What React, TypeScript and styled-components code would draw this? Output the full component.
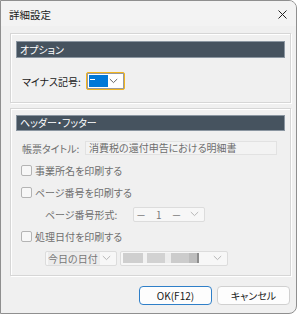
import styled, { createGlobalStyle } from 'styled-components';

const GlobalStyle = createGlobalStyle`
  html, body {
    margin: 0;
    padding: 0;
    background: #ffffff;
  }
  body {
    font-family: "Noto Sans CJK JP", "Noto Sans", sans-serif;
    font-feature-settings: "palt";
  }
`;

const Chevron: React.FC<{ color?: string }> = ({ color = '#8a8a8a' }) => (
  <svg width="9" height="6" viewBox="0 0 9 6">
    <path d="M0.8 1 L4.5 4.6 L8.2 1" fill="none" stroke={color} strokeWidth="0.9" />
  </svg>
);

const Check: React.FC<{ label: string }> = ({ label }) => (
  <CheckRow>
    <CheckBox />
    <CheckLabel>{label}</CheckLabel>
  </CheckRow>
);

const App: React.FC = () => {
  return (
    <>
      <GlobalStyle />
      <Window>
        <TitleBar>
          <Title>詳細設定</Title>
          <CloseButton>
            <svg width="9" height="9" viewBox="0 0 9 9">
              <path d="M0.5 0.5 L8.5 8.5 M8.5 0.5 L0.5 8.5" stroke="#222" strokeWidth="1" />
            </svg>
          </CloseButton>
        </TitleBar>
        <Body>
          <Group $pad={7}>
            <GroupHeader $h={17}>オプション</GroupHeader>
            <OptionRow>
              <Label $w={64} $enabled>マイナス記号:</Label>
              <FocusRing>
                <SelectInner>
                  <Highlight><Dash /></Highlight>
                  <Chevron color="#555" />
                </SelectInner>
              </FocusRing>
            </OptionRow>
          </Group>

          <Group $pad={6}>
            <GroupHeader $h={16}>ヘッダー・フッター</GroupHeader>
            <Rows>
              <Row>
                <Label $w={63}>帳票タイトル:</Label>
                <TextField>消費税の還付申告における明細書</TextField>
              </Row>
              <Check label="事業所名を印刷する" />
              <Check label="ページ番号を印刷する" />
              <Row $indent={29}>
                <Label $w={88}>ページ番号形式:</Label>
                <Select $w={72} $h={15}>
                  <SelectText>－　1　－</SelectText>
                  <Chevron color="#b0b0b0" />
                </Select>
              </Row>
              <Check label="処理日付を印刷する" />
              <Row $indent={29}>
                <Select $w={72} $h={15}>
                  <SelectText $shade>今日の日付</SelectText>
                  <Chevron color="#b0b0b0" />
                </Select>
                <Gap />
                <Select $w={108} $h={15}>
                  <Blurred>
                    <Blob $w={20} $c="#cfcfcf" />
                    <Blob $w={4} $c="#f2f2f2" />
                    <Blob $w={18} $c="#d2d2d2" />
                    <Blob $w={6} $c="#ededed" />
                    <Blob $w={18} $c="#cccccc" />
                    <Blob $w={8} $c="#bdbdbd" />
                    <Blob $w={2} $c="#8d8d8d" />
                  </Blurred>
                  <Chevron color="#b0b0b0" />
                </Select>
              </Row>
            </Rows>
          </Group>

          <Buttons>
            <Button $primary>OK(F12)</Button>
            <Button>キャンセル</Button>
          </Buttons>
        </Body>
      </Window>
    </>
  );
};

const Window = styled.div`
  box-sizing: border-box;
  width: 297px;
  height: 314px;
  border: 1px solid #8f8f8f;
  border-radius: 0 8px 8px 0;
  background: #f0f0f0;
  overflow: hidden;
  display: flex;
  flex-direction: column;
`;

const TitleBar = styled.div`
  height: 25px;
  flex: none;
  background: #f3f3f3;
  display: flex;
  align-items: center;
  justify-content: space-between;
  padding: 0 0 0 8px;
`;

const Title = styled.div`
  font-size: 10.5px;
  color: #1a1a1a;
  margin-top: 2px;
`;

const CloseButton = styled.div`
  width: 28px;
  height: 25px;
  display: flex;
  align-items: center;
  justify-content: center;
  margin-right: 0;
  margin-top: 2px;
`;

const Body = styled.div`
  padding: 7px 4px 0 9px;
  display: flex;
  flex-direction: column;
`;

const Group = styled.div<{ $pad: number }>`
  box-sizing: border-box;
  width: 281px;
  border: 1px solid #d6d6d6;
  box-shadow: inset 1px 1px 0 #ffffff, 1px 1px 0 #ffffff;
  padding: ${(p) => p.$pad}px 5px 0 5px;
  margin-bottom: 5px;
`;

const GroupHeader = styled.div<{ $h: number }>`
  box-sizing: border-box;
  height: ${(p) => p.$h}px;
  background: #46535f;
  border: 1px solid #8b96a1;
  color: #ffffff;
  font-size: 10px;
  line-height: ${(p) => p.$h - 2}px;
  padding-left: 3px;
`;

const OptionRow = styled.div`
  display: flex;
  align-items: center;
  height: 18px;
  margin: 14px 0 12px 6px;
`;

const Label = styled.div<{ $w: number; $enabled?: boolean }>`
  width: ${(p) => p.$w}px;
  flex: none;
  font-size: 10px;
  color: ${(p) => (p.$enabled ? '#1a1a1a' : '#6e6e6e')};
`;

const FocusRing = styled.div`
  box-sizing: border-box;
  width: 39px;
  height: 18px;
  border: 1.5px solid #f2b51e;
  border-radius: 2px;
  padding: 0;
`;

const SelectInner = styled.div`
  box-sizing: border-box;
  height: 100%;
  border: 1px solid #9a9a9a;
  background: #ffffff;
  display: flex;
  align-items: center;
  justify-content: space-between;
  padding: 1px 5px 1px 1px;
`;

const Highlight = styled.div`
  width: 19px;
  height: 12px;
  background: #0078d7;
  display: flex;
  align-items: center;
  padding-left: 1px;
  box-sizing: border-box;
`;

const Dash = styled.div`
  width: 5px;
  height: 1px;
  background: #ffffff;
  margin-bottom: 3px;
`;

const Rows = styled.div`
  display: flex;
  flex-direction: column;
  margin: 6px 0 6px 0;
`;

const Row = styled.div<{ $indent?: number }>`
  display: flex;
  align-items: center;
  height: 22px;
  padding-left: ${(p) => 6 + (p.$indent ?? 0) - (p.$indent ? 6 : 0)}px;
`;

const TextField = styled.div`
  box-sizing: border-box;
  width: 192px;
  height: 14px;
  border: 1px solid #e2e2e2;
  background: #f3f3f3;
  font-size: 10px;
  line-height: 12px;
  color: #6e6e6e;
  padding-left: 3px;
  white-space: nowrap;
`;

const CheckRow = styled.div`
  display: flex;
  align-items: center;
  height: 22px;
  padding-left: 5px;
`;

const CheckBox = styled.div`
  box-sizing: border-box;
  width: 11px;
  height: 11px;
  border: 1px solid #b4b4b4;
  border-radius: 2px;
  background: #f7f7f7;
  margin-right: 3px;
`;

const CheckLabel = styled.div`
  font-size: 10px;
  color: #6e6e6e;
`;

const Select = styled.div<{ $w: number; $h: number }>`
  box-sizing: border-box;
  width: ${(p) => p.$w}px;
  height: ${(p) => p.$h}px;
  border: 1px solid #dcdcdc;
  border-radius: 2px;
  background: #f7f7f7;
  display: flex;
  align-items: center;
  justify-content: space-between;
  padding: 0 5px 0 2px;
`;

const SelectText = styled.div<{ $shade?: boolean }>`
  font-size: 10px;
  line-height: 13px;
  color: #777777;
  padding-right: 2px;
  background: ${(p) => (p.$shade ? '#ececec' : 'transparent')};
`;

const Gap = styled.div`
  width: 3px;
`;

const Blurred = styled.div`
  display: flex;
  align-items: center;
  height: 11px;
  filter: blur(0.6px);
`;

const Blob = styled.div<{ $w: number; $c: string }>`
  width: ${(p) => p.$w}px;
  height: 10px;
  background: ${(p) => p.$c};
`;

const Buttons = styled.div`
  display: flex;
  justify-content: flex-end;
  gap: 5px;
  width: 280px;
  margin-top: 5px;
`;

const Button = styled.div<{ $primary?: boolean }>`
  box-sizing: border-box;
  width: 73px;
  height: 19px;
  border: 1px solid ${(p) => (p.$primary ? '#2f7fc8' : '#d0d0d0')};
  border-radius: 4px;
  background: #fdfdfd;
  font-size: 10px;
  color: #1a1a1a;
  display: flex;
  align-items: center;
  justify-content: center;
`;

export default App;
